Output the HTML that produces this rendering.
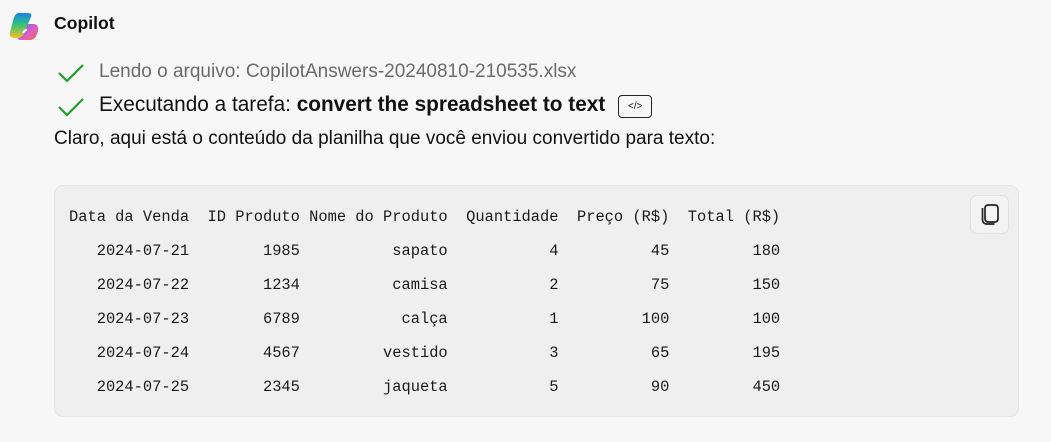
<!DOCTYPE html>
<html><head><meta charset="utf-8"><style>
html,body{margin:0;padding:0;background:#f7f7f7;width:1051px;height:442px;overflow:hidden;font-family:"Liberation Sans",sans-serif;color:#111;}
.abs{position:absolute;white-space:nowrap;}
.title{left:54px;top:13px;font-size:17.6px;font-weight:bold;}
.l1{left:99px;top:61px;font-size:19px;color:#6b6b6b;}
.l2{left:99px;top:93px;font-size:20.8px;color:#111;}
.l3{left:54px;top:128px;font-size:19px;color:#111;}
.badge{display:inline-block;width:32px;height:21px;border:1px solid #222;border-radius:4px;font-size:10px;text-align:center;line-height:21px;vertical-align:2px;margin-left:13px;font-weight:normal;}
.box{left:54px;top:185px;width:963px;height:230px;background:#efefef;border:1px solid #e4e4e4;border-radius:9px;}
pre{position:absolute;left:69px;top:200px;margin:0;font-family:"Liberation Mono",monospace;font-size:15.4px;line-height:34px;color:#1a1a1a;}
.copy{left:970px;top:195px;width:37px;height:37px;border:1px solid #e0e0e0;border-radius:7px;background:#f3f3f3;}
</style></head><body>
<svg class="abs" style="left:9px;top:12px" width="32" height="30" viewBox="0 0 32 30">
<defs><linearGradient id="g1" x1="0" y1="0" x2="0" y2="1"><stop offset="0" stop-color="#1e7ff0"/><stop offset=".45" stop-color="#2ec27a"/><stop offset="1" stop-color="#f5c02a"/></linearGradient>
<linearGradient id="g2" x1="0" y1="0" x2="1" y2="1"><stop offset="0" stop-color="#7a5cf0"/><stop offset=".6" stop-color="#e05fc0"/><stop offset="1" stop-color="#f36a3a"/></linearGradient></defs>
<path d="M18 12 h6 c4 0 6 3 5 7 l-1 3 c-1 4 -4 6 -7 6 h-10 c-2 0 -3 -2 -2 -4 l5 -8 c1 -2 2 -4 4 -4z" fill="url(#g2)"/>
<path d="M10 1 h9 c3 0 4 2 3 4 l-7 16 c-1 3 -3 5 -6 5 h-4 c-3 0 -5 -2 -4 -6 l3 -11 c1 -5 3 -8 6 -8z" fill="url(#g1)"/>
<path d="M14 21 c1 -2 2 -3 4 -3" stroke="#fff" stroke-width="2" fill="none"/>
</svg>
<div class="abs title">Copilot</div>
<svg class="abs" style="left:57px;top:62px" width="28" height="22"><path d="M2 11 L10 19 L26 3" fill="none" stroke="#1f9e2a" stroke-width="2.2"/></svg>
<svg class="abs" style="left:57px;top:96px" width="28" height="22"><path d="M2 11 L10 19 L26 3" fill="none" stroke="#1f9e2a" stroke-width="2.2"/></svg>
<div class="abs l1">Lendo o arquivo: CopilotAnswers-20240810-210535.xlsx</div>
<div class="abs l2">Executando a tarefa: <b>convert the spreadsheet to text</b><span class="badge">&lt;/&gt;</span></div>
<div class="abs l3">Claro, aqui está o conteúdo da planilha que você enviou convertido para texto:</div>
<div class="abs box"></div>
<pre>Data da Venda  ID Produto Nome do Produto  Quantidade  Preço (R$)  Total (R$)
   2024-07-21        1985          sapato           4          45         180
   2024-07-22        1234          camisa           2          75         150
   2024-07-23        6789           calça           1         100         100
   2024-07-24        4567         vestido           3          65         195
   2024-07-25        2345         jaqueta           5          90         450</pre>
<div class="abs copy"><svg width="37" height="37"><rect x="14" y="9" width="13" height="17" rx="3" fill="none" stroke="#222" stroke-width="1.7"/><path d="M11.5 12 v12 a4 4 0 0 0 4 4 h8" fill="none" stroke="#222" stroke-width="1.7"/></svg></div>
</body></html>
